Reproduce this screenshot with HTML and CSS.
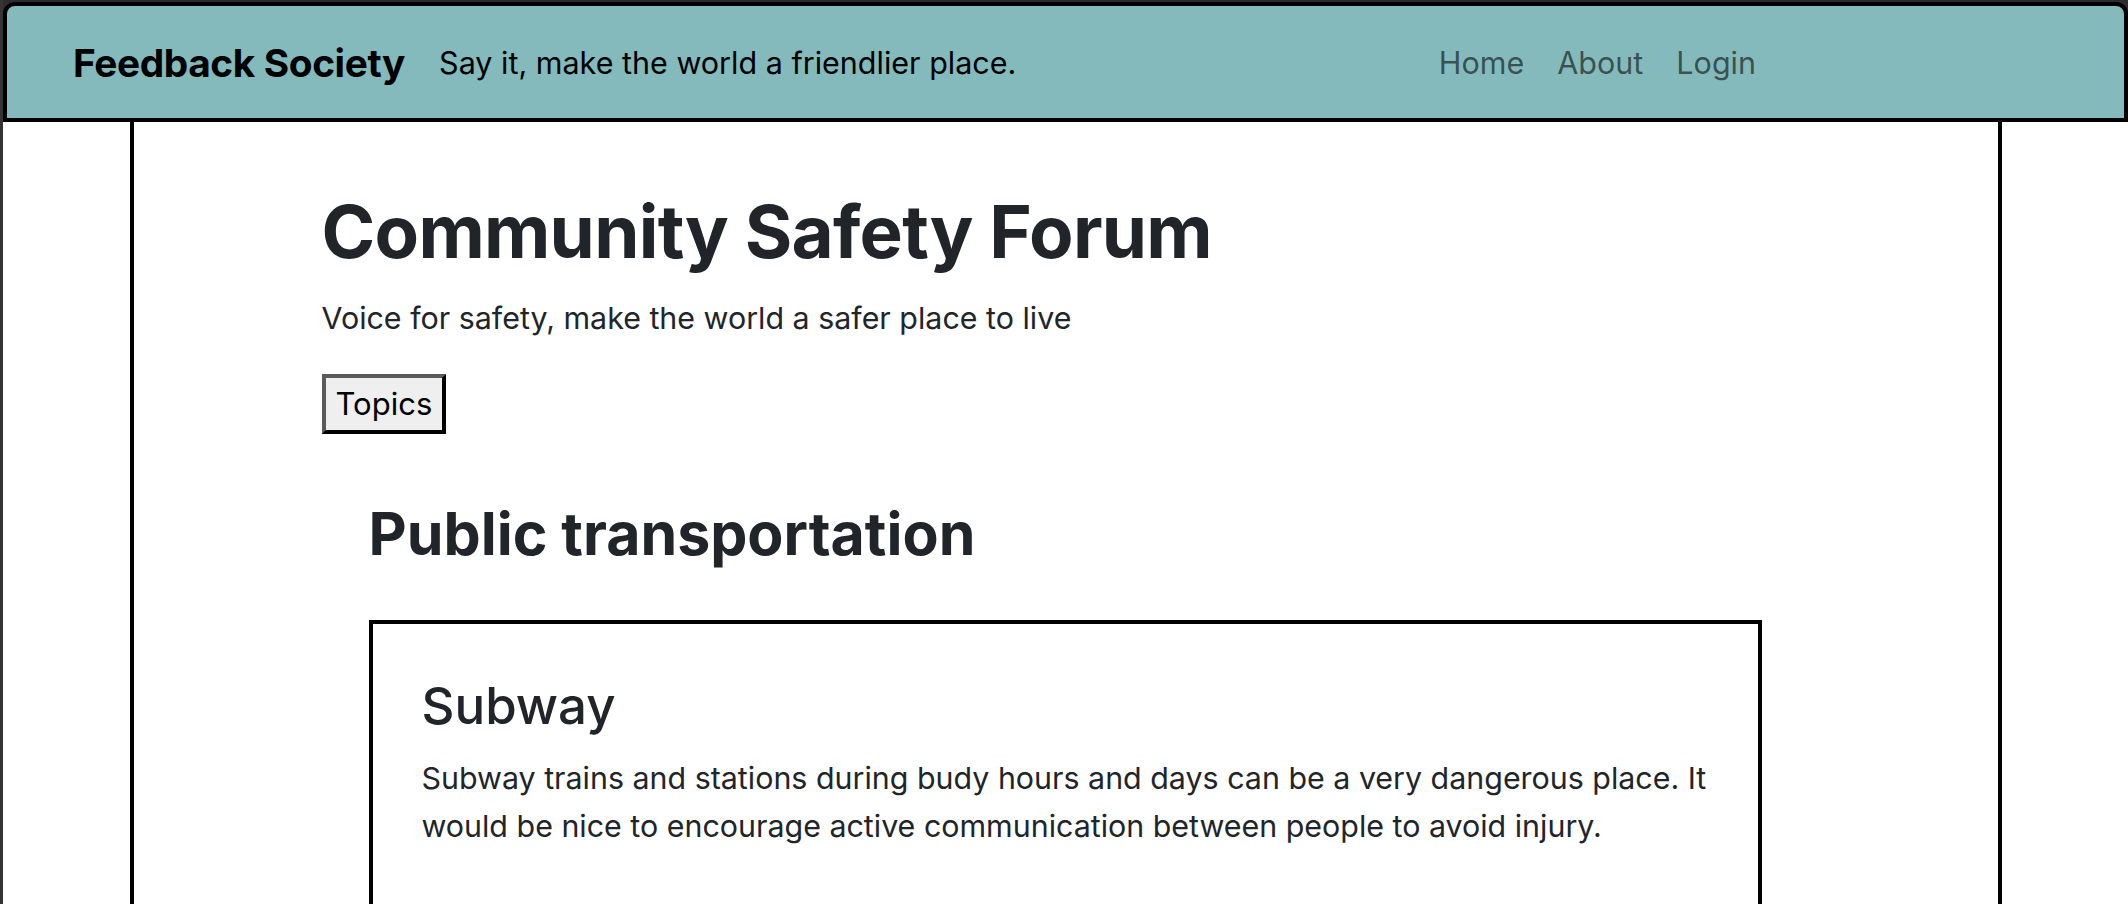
FILE: index.html
```html
<!DOCTYPE html>
<html lang="en">
<head>
<meta charset="utf-8">
<title>Community Safety Forum</title>
<link rel="stylesheet" href="styles.css">
</head>
<body>
<div class="window">
  <header class="chrome">
    <nav class="navbar">
      <div class="navbar-inner">
        <a class="brand" href="#">Feedback Society</a>
        <span class="tagline">Say it, make the world a friendlier place.</span>
        <ul class="nav-links">
          <li><a href="#">Home</a></li>
          <li><a href="#">About</a></li>
          <li><a href="#">Login</a></li>
        </ul>
      </div>
    </nav>
  </header>
  <main class="page">
    <h1 class="title">Community Safety Forum</h1>
    <p class="lead">Voice for safety, make the world a safer place to live</p>
    <button class="topics-btn" type="button">Topics</button>
    <section class="topic">
      <h2 class="topic-title">Public transportation</h2>
      <article class="card">
        <h3 class="card-title">Subway</h3>
        <p class="card-text">Subway trains and stations during budy hours and days can be a very dangerous place. It would be nice to encourage active communication between people to avoid injury.</p>
      </article>
    </section>
  </main>
</div>
</body>
</html>
```
FILE: styles.css
```css
* { box-sizing: border-box; }
html, body {
  margin: 0;
  padding: 0;
  background: #ffffff;
  font-family: Inter, "Noto Sans", "Liberation Sans", sans-serif;
  color: #212529;
}
.window {
  border-left: 3px solid #353535;
  min-height: 100vh;
  overflow: hidden;
}
.chrome {
  background: #2c2c2e;
  padding-top: 2px;
}
.navbar {
  background: #84babb;
  border: 4px solid #000;
  border-radius: 12px 12px 0 0;
  height: 120px;
}
.navbar-inner {
  width: 1683px;
  margin-left: 66px;
  height: 100%;
  display: flex;
  align-items: center;
}
.brand {
  font-weight: 700;
  font-size: 38.8px;
  color: #000;
  text-decoration: none;
  letter-spacing: -0.01em;
}
.tagline {
  font-size: 30.5px;
  color: #000;
  margin-left: 34px;
}
.nav-links {
  list-style: none;
  margin: 0 0 0 auto;
  padding: 0;
  display: flex;
  gap: 33px;
}
.nav-links a {
  font-size: 30.5px;
  color: rgba(0, 0, 0, 0.58);
  text-decoration: none;
}
.page {
  width: 1872px;
  margin: 0 auto;
  border: 4px solid #000;
  border-top: 0;
  padding: 67px 188px 0;
  min-height: 900px;
}
.title {
  margin: 0;
  font-size: 72.7px;
  line-height: 1.2;
  font-weight: 700;
  letter-spacing: -0.01em;
}
.lead {
  margin: 20px 0 0;
  font-size: 30.4px;
  line-height: 1.5;
}
.topics-btn {
  margin-top: 32px;
  height: 60px;
  padding: 0 10px;
  font-family: Inter, "Noto Sans", sans-serif;
  font-size: 31px;
  color: #000;
  background: #efefef;
  border: 4px solid;
  border-color: #5a5a5a #000 #000 #5a5a5a;
  border-radius: 0;
}
.topic {
  margin: 65px 48px 0 47px;
}
.topic-title {
  margin: 0;
  font-size: 59px;
  line-height: 1.2;
  font-weight: 700;
}
.card {
  margin-top: 50px;
  border: 4px solid #000;
  padding: 51px 49px 80px;
}
.card-title {
  margin: 0;
  font-size: 51px;
  line-height: 1.2;
  font-weight: 500;
}
.card-text {
  margin: 18px 0 0;
  font-size: 30.4px;
  line-height: 48px;
}
```
